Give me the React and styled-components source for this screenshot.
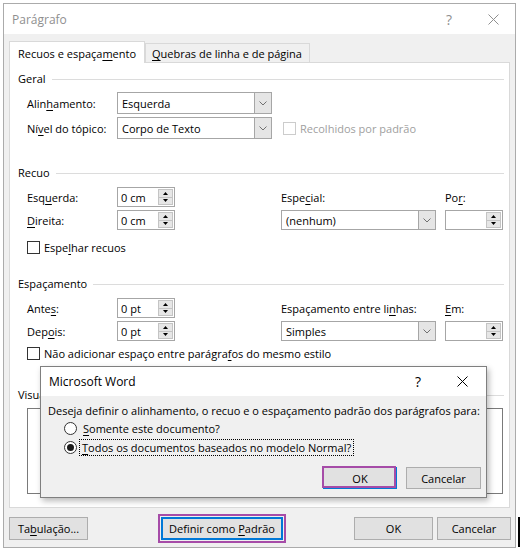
import React from 'react';
import styled, { createGlobalStyle } from 'styled-components';

const Global = createGlobalStyle`
  html, body { margin: 0; padding: 0; background: #fff; }
  body { font-family: "Open Sans", "Noto Sans", sans-serif; font-size: 11px; color: #000; }
  * { box-sizing: border-box; }
`;

const Page = styled.div`
  position: relative;
  width: 526px;
  height: 554px;
  padding: 3px 0 0 3px;
  overflow: hidden;
`;

const Window = styled.div`
  width: 513px;
  height: 545px;
  border: 1px solid #ababab;
  background: #f0f0f0;
  display: flex;
  flex-direction: column;
`;

const TitleBar = styled.div`
  height: ${p => p.$h}px;
  background: #fff;
  display: flex;
  align-items: center;
  padding-left: 8px;
  padding-right: ${p => p.$pr}px;
  color: ${p => (p.$active ? '#000' : '#8f8f8f')};
  font-size: 12px;
  flex-shrink: 0;
`;

const TitleText = styled.div`
  flex: 1;
`;

const Caption = styled.div`
  width: 44px;
  height: 100%;
  display: flex;
  align-items: center;
  justify-content: center;
  font-size: 14px;
  color: inherit;
`;

const Acc = styled.span`
  text-decoration: underline;
  text-underline-offset: 2px;
`;

const Text = styled.span`
  white-space: nowrap;
`;

const TabStrip = styled.div`
  display: flex;
  align-items: flex-end;
  height: 21px;
  margin: 7px 0 0 5px;
  position: relative;
  z-index: 1;
`;

const Tab = styled.div`
  height: ${p => (p.$active ? 22 : 19)}px;
  margin-bottom: ${p => (p.$active ? -1 : 0)}px;
  padding: 0 ${p => (p.$active ? 8 : 6)}px;
  width: ${p => p.$w}px;
  border: 1px solid #d9d9d9;
  border-bottom: none;
  background: ${p => (p.$active ? '#fff' : '#f0f0f0')};
  display: flex;
  align-items: center;
  padding-top: ${p => (p.$active ? 2 : 1)}px;
  white-space: nowrap;
`;

const Panel = styled.div`
  margin: 0 5px;
  height: 446px;
  border: 1px solid #d9d9d9;
  background: #fff;
  flex-shrink: 0;
`;

const Group = styled.section`
  margin-top: ${p => p.$gap}px;
`;

const GroupTitle = styled.div`
  display: flex;
  align-items: center;
  height: 14px;
  line-height: 14px;
  padding: 0 5px 0 8px;
  &::after {
    content: '';
    flex: 1;
    height: 1px;
    background: #dcdcdc;
    margin-left: 6px;
  }
`;

const GeralGrid = styled.div`
  display: grid;
  grid-template-columns: 90px 155px auto;
  grid-auto-rows: 22px;
  row-gap: 3px;
  align-items: center;
  margin: 6px 0 0 17px;
`;

const FieldGrid = styled.div`
  display: grid;
  grid-template-columns: 90px 58px 106px 155px 9px 58px;
  grid-auto-rows: 20px;
  row-gap: 3px;
  align-items: center;
  margin: 7px 0 0 17px;
`;

const Label = styled.div`
  white-space: nowrap;
  color: ${p => (p.$disabled ? '#a0a0a0' : '#000')};
`;

const Blank = styled.div``;

const SelectBox = styled.div`
  height: 100%;
  border: 1px solid #a6a6a6;
  background: #fff;
  display: flex;
  align-items: stretch;
`;

const SelectValue = styled.div`
  flex: 1;
  display: flex;
  align-items: center;
  padding-left: 4px;
  white-space: nowrap;
`;

const SelectArrow = styled.div`
  width: 17px;
  background: #e5e5e5;
  border-left: 1px solid #a6a6a6;
  display: flex;
  align-items: center;
  justify-content: center;
`;

const Select = ({ value }) => (
  <SelectBox>
    <SelectValue>{value}</SelectValue>
    <SelectArrow>
      <svg width="8" height="5" viewBox="0 0 8 5">
        <path d="M0.5 0.5 L4 4 L7.5 0.5" fill="none" stroke="#707070" strokeWidth="1" />
      </svg>
    </SelectArrow>
  </SelectBox>
);

const SpinBox = styled.div`
  height: 100%;
  border: 1px solid #a6a6a6;
  background: #fff;
  display: flex;
  align-items: stretch;
`;

const SpinValue = styled.div`
  flex: 1;
  display: flex;
  align-items: center;
  padding-left: 3px;
  white-space: nowrap;
`;

const SpinButtons = styled.div`
  width: 16px;
  display: flex;
  flex-direction: column;
  padding: 1px 1px 1px 0;
`;

const SpinButton = styled.div`
  flex: 1;
  background: #e6e6e6;
  border: 1px solid #c4c4c4;
  margin-top: ${p => (p.$down ? -1 : 0)}px;
  display: flex;
  align-items: center;
  justify-content: center;
`;

const Spin = ({ value }) => (
  <SpinBox>
    <SpinValue>{value}</SpinValue>
    <SpinButtons>
      <SpinButton>
        <svg width="5" height="3" viewBox="0 0 5 3"><path d="M0 3 L2.5 0 L5 3 Z" fill="#000" /></svg>
      </SpinButton>
      <SpinButton $down>
        <svg width="5" height="3" viewBox="0 0 5 3"><path d="M0 0 L2.5 3 L5 0 Z" fill="#000" /></svg>
      </SpinButton>
    </SpinButtons>
  </SpinBox>
);

const CheckRow = styled.div`
  display: flex;
  align-items: center;
  gap: 4px;
  height: 13px;
  margin: ${p => p.$mt}px 0 0 ${p => p.$ml}px;
  white-space: nowrap;
  color: ${p => (p.$disabled ? '#a0a0a0' : '#000')};
`;

const CheckBox = styled.div`
  width: 13px;
  height: 13px;
  border: 1px solid ${p => (p.$disabled ? '#cccccc' : '#333')};
  background: #fff;
  flex-shrink: 0;
`;

const Preview = styled.div`
  margin: 6px 6px 0 17px;
  height: 86px;
  border: 1px solid #7a7a7a;
  background: #fff;
`;

const Footer = styled.div`
  display: flex;
  justify-content: space-between;
  margin-top: 9px;
  padding: 0 4px 0 5px;
`;

const ButtonGroup = styled.div`
  display: flex;
  gap: ${p => p.$gap}px;
`;

const Button = styled.div`
  position: relative;
  width: ${p => p.$w}px;
  height: ${p => p.$h}px;
  background: #e1e1e1;
  border: ${p => (p.$focus === 'outer' ? '2px solid #0078d7' : p.$focus === 'inner' ? '1px solid #0078d7' : '1px solid #adadad')};
  box-shadow: ${p => (p.$focus === 'outer' ? '0 0 0 1px #f0f0f0, 0 0 0 3px #a64ca8' : 'none')};
  display: flex;
  align-items: center;
  justify-content: center;
  white-space: nowrap;
  &::after {
    content: '';
    display: ${p => (p.$focus === 'inner' ? 'block' : 'none')};
    position: absolute;
    left: -2px;
    top: -2px;
    right: 0;
    bottom: 0;
    border: 2px solid #a64ca8;
  }
`;

const Modal = styled.div`
  position: absolute;
  left: 40px;
  top: 366px;
  width: 447px;
  height: 132px;
  border: 1px solid #7f7f7f;
  background: #f0f0f0;
  box-shadow: 2px 3px 6px rgba(0, 0, 0, 0.28);
  display: flex;
  flex-direction: column;
`;

const ModalBody = styled.div`
  padding: 8px 5px 0 7px;
  display: flex;
  flex-direction: column;
`;

const Question = styled.div`
  height: 14px;
  line-height: 14px;
  white-space: nowrap;
`;

const RadioList = styled.div`
  display: flex;
  flex-direction: column;
  margin: 1px 0 0 16px;
`;

const RadioRow = styled.div`
  height: 19px;
  display: flex;
  align-items: center;
  gap: 2px;
`;

const RadioCircle = styled.div`
  width: 13px;
  height: 13px;
  border-radius: 50%;
  border: 1px solid #333;
  background: #fff;
  display: flex;
  align-items: center;
  justify-content: center;
  flex-shrink: 0;
  &::after {
    content: '';
    width: 7px;
    height: 7px;
    border-radius: 50%;
    background: #1a1a1a;
    display: ${p => (p.$checked ? 'block' : 'none')};
  }
`;

const RadioLabel = styled.div`
  height: 17px;
  display: flex;
  align-items: center;
  padding: 0 2px 0 ${p => (p.$focused ? 2 : 3)}px;
  border: 1px dotted ${p => (p.$focused ? '#000' : 'transparent')};
  white-space: nowrap;
`;

const ModalButtons = styled.div`
  display: flex;
  justify-content: flex-end;
  gap: 9px;
  margin-top: 10px;
`;

const Caret = styled.div`
  position: absolute;
  left: 518px;
  top: 517px;
  width: 2px;
  height: 30px;
  background: #000;
`;

const CloseIcon = ({ color }) => (
  <svg width="11" height="11" viewBox="0 0 11 11">
    <path d="M0.5 0.5 L10.5 10.5 M10.5 0.5 L0.5 10.5" stroke={color} strokeWidth="1" fill="none" />
  </svg>
);

export default function App() {
  return (
    <Page>
      <Global />
      <Window>
        <TitleBar $h={30} $pr={0}>
          <TitleText>Parágrafo</TitleText>
          <Caption>?</Caption>
          <Caption><CloseIcon color="#8f8f8f" /></Caption>
        </TitleBar>
        <TabStrip>
          <Tab $active $w={136}><Text>Recuos e espaça<Acc>m</Acc>ento</Text></Tab>
          <Tab $w={165}><Text><Acc>Q</Acc>uebras de linha e de página</Text></Tab>
        </TabStrip>
        <Panel>
          <Group $gap={9}>
            <GroupTitle>Geral</GroupTitle>
            <GeralGrid>
              <Label>Alin<Acc>h</Acc>amento:</Label>
              <Select value="Esquerda" />
              <Blank />
              <Label>Ní<Acc>v</Acc>el do tópico:</Label>
              <Select value="Corpo de Texto" />
              <CheckRow $mt={0} $ml={11} $disabled>
                <CheckBox $disabled />
                <Text>Recolhidos por padrão</Text>
              </CheckRow>
            </GeralGrid>
          </Group>
          <Group $gap={27}>
            <GroupTitle>Recuo</GroupTitle>
            <FieldGrid>
              <Label>Esq<Acc>u</Acc>erda:</Label>
              <Spin value="0 cm" />
              <Blank />
              <Label>Espe<Acc>c</Acc>ial:</Label>
              <Blank />
              <Label>Po<Acc>r</Acc>:</Label>
              <Label><Acc>D</Acc>ireita:</Label>
              <Spin value="0 cm" />
              <Blank />
              <Select value="(nenhum)" />
              <Blank />
              <Spin value="" />
            </FieldGrid>
            <CheckRow $mt={11} $ml={17}>
              <CheckBox />
              <Text>Espe<Acc>l</Acc>har recuos</Text>
            </CheckRow>
          </Group>
          <Group $gap={23}>
            <GroupTitle>Espaçamento</GroupTitle>
            <FieldGrid>
              <Label>Ante<Acc>s</Acc>:</Label>
              <Spin value="0 pt" />
              <Blank />
              <Label>Espaçamento entre li<Acc>n</Acc>has:</Label>
              <Blank />
              <Label><Acc>E</Acc>m:</Label>
              <Label>Dep<Acc>o</Acc>is:</Label>
              <Spin value="0 pt" />
              <Blank />
              <Select value="Simples" />
              <Blank />
              <Spin value="" />
            </FieldGrid>
            <CheckRow $mt={6} $ml={17}>
              <CheckBox />
              <Text>Não adicionar espaço entre parágra<Acc>f</Acc>os do mesmo estilo</Text>
            </CheckRow>
          </Group>
          <Group $gap={28}>
            <GroupTitle>Visualização</GroupTitle>
            <Preview />
          </Group>
        </Panel>
        <Footer>
          <ButtonGroup $gap={73}>
            <Button $w={79} $h={23}><Text>Ta<Acc>b</Acc>ulação...</Text></Button>
            <Button $w={122} $h={23} $focus="outer"><Text>Definir como <Acc>P</Acc>adrão</Text></Button>
          </ButtonGroup>
          <ButtonGroup $gap={4}>
            <Button $w={79} $h={23}>OK</Button>
            <Button $w={74} $h={23}>Cancelar</Button>
          </ButtonGroup>
        </Footer>
      </Window>
      <Modal>
        <TitleBar $h={29} $pr={2} $active>
          <TitleText>Microsoft Word</TitleText>
          <Caption>?</Caption>
          <Caption><CloseIcon color="#000" /></Caption>
        </TitleBar>
        <ModalBody>
          <Question>Deseja definir o alinhamento, o recuo e o espaçamento padrão dos parágrafos para:</Question>
          <RadioList>
            <RadioRow>
              <RadioCircle />
              <RadioLabel><Text><Acc>S</Acc>omente este documento?</Text></RadioLabel>
            </RadioRow>
            <RadioRow>
              <RadioCircle $checked />
              <RadioLabel $focused><Text><Acc>T</Acc>odos os documentos baseados no modelo Normal?</Text></RadioLabel>
            </RadioRow>
          </RadioList>
          <ModalButtons>
            <Button $w={74} $h={22} $focus="inner">OK</Button>
            <Button $w={75} $h={22}>Cancelar</Button>
          </ModalButtons>
        </ModalBody>
      </Modal>
      <Caret />
    </Page>
  );
}
